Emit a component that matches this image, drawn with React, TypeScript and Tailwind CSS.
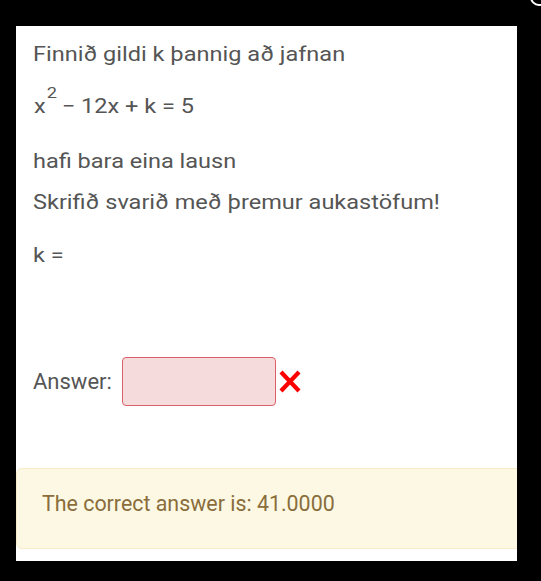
import React from "react";

export default function App() {
  return (
    <div className="relative w-[541px] h-[581px] bg-black pt-[26px] pl-4 font-['Roboto','Liberation_Sans',sans-serif]">
      <svg width="24" height="14" viewBox="0 0 24 14" className="absolute right-0 top-0">
        <circle cx="22" cy="-3" r="8" fill="none" stroke="#ffffff" strokeWidth="2" />
      </svg>
      <div className="w-[501px] h-[535px] bg-white overflow-hidden flex flex-col">
        <div className="flex flex-col items-start px-[17px] pt-[14px] text-[20px] leading-[28px] text-[#555555]">
          <p className="inline-block origin-left scale-x-[1.176] whitespace-nowrap">Finnið gildi k þannig að jafnan</p>
          <p className="mt-[24px] ml-[1px] inline-block origin-left scale-x-[1.176] whitespace-nowrap">
            x<span className="ml-[1px] text-[15.5px] leading-[0] align-[15px]">2</span>
            <span className="ml-[4px]">− 12x + k = 5</span>
          </p>
          <p className="mt-[27px] inline-block origin-left scale-x-[1.176] whitespace-nowrap">hafi bara eina lausn</p>
          <p className="mt-[13px] inline-block origin-left scale-x-[1.176] whitespace-nowrap">Skrifið svarið með þremur aukastöfum!</p>
          <p className="mt-[25px] inline-block origin-left scale-x-[1.176] whitespace-nowrap">k =</p>
          <div className="mt-[88px] flex items-center">
            <span className="text-[22px]">Answer:</span>
            <div className="ml-[10px] w-[154px] h-[49px] rounded-[4px] border border-[#d9606a] bg-[#f6dbdc]"></div>
            <svg width="22" height="23" viewBox="0 0 22 23" className="ml-[3px]">
              <path d="M2 2 L20 21 M20 2 L2 21" stroke="#ff0000" strokeWidth="4.2" strokeLinecap="butt" />
            </svg>
          </div>
        </div>
        <div className="mt-[62px] w-[520px] h-[81px] rounded-[6px] border border-[#f8ecc8] bg-[#fcf8e3] text-[#8a6d3b] text-[21.4px] leading-[30px] pl-[25px] pt-[20px] whitespace-nowrap">
          The correct answer is: 41.0000
        </div>
      </div>
    </div>
  );
}
